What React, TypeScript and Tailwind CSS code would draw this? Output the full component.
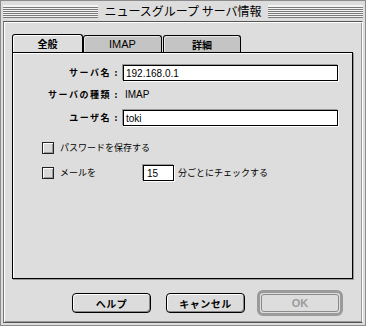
import React from "react";

const JP = "font-['Noto_Sans_CJK_JP','Liberation_Sans',sans-serif]";
const FIELD =
  "h-[16px] border border-black bg-white font-['Liberation_Sans',sans-serif] text-[10px] leading-[14px] text-black shadow-[-1px_-1px_0_#999,1px_1px_0_#fff] outline-none";

function Stripes() {
  return (
    <div className="h-[13px] flex-1 border-t border-[#f4f4f4] bg-[repeating-linear-gradient(to_bottom,#f4f4f4_0px,#f4f4f4_1px,#7a7a7a_1px,#7a7a7a_2px)]" />
  );
}

function Checkbox({ label }: { label: string }) {
  return (
    <span className="flex items-center gap-[6px]">
      <span className="h-[12px] w-[12px] border border-[#222] bg-[#d8d8d8] shadow-[inset_1px_1px_0_#fff,inset_-1px_-1px_0_#999]" />
      <span className="text-[9px] leading-[16px] text-black">{label}</span>
    </span>
  );
}

function Button({ label, width }: { label: string; width: string }) {
  return (
    <button
      className={`${width} flex h-[20px] items-center justify-center rounded-[4px] border border-black bg-[#dcdcdc] text-[10px] font-bold tracking-[0.5px] text-black shadow-[inset_1px_1px_0_#fff,inset_-1px_-1px_0_#888]`}
    >
      {label}
    </button>
  );
}

function Label({ children }: { children: React.ReactNode }) {
  return (
    <span className="w-[106px] text-right text-[9px] font-bold leading-[16px] tracking-[1.5px]">{children}</span>
  );
}

export default function App() {
  return (
    <div className={`flex h-[326px] w-[366px] flex-col border border-[#8c8c8c] bg-[#dddddd] ${JP}`}>
      {/* Title bar */}
      <div className="flex h-[20px] items-center gap-[6px] px-[2px]">
        <Stripes />
        <span className="text-[12px] leading-[14px] text-black">ニュースグループ サーバ情報</span>
        <Stripes />
      </div>

      {/* Window body */}
      <div className="mx-[2px] mb-[2px] flex flex-1 flex-col border border-t-[#555] border-l-[#777] border-r-[#fff] border-b-[#555] shadow-[inset_1px_1px_0_#fff,inset_-1px_-1px_0_#999]">
        {/* Tabs */}
        <div className="ml-[8px] mt-[13px] flex h-[17px] items-end">
          <div className="relative z-10 flex h-[18px] w-[71px] items-center justify-center rounded-t-[3px] border border-b-0 border-black bg-[#dddddd] pb-[1px] text-[10px] font-bold shadow-[inset_1px_1px_0_#fff]">
            全般
          </div>
          <div className="flex h-[17px] w-[79px] items-center justify-center rounded-t-[3px] border border-b-0 border-black bg-[#c4c4c4] font-['Liberation_Sans',sans-serif] text-[11px] shadow-[inset_1px_1px_0_#e6e6e6]">
            IMAP
          </div>
          <div className="ml-[1px] flex h-[17px] w-[78px] items-center justify-center rounded-t-[3px] border border-b-0 border-black bg-[#c4c4c4] text-[10px] font-bold shadow-[inset_1px_1px_0_#e6e6e6]">
            詳細
          </div>
        </div>

        {/* Tab panel */}
        <div className="ml-[8px] h-[227px] w-[341px] border border-black bg-[#dddddd] shadow-[inset_1px_1px_0_#fff,1px_1px_0_#999]">
          <div className="mt-[12px] flex items-center">
            <Label>サーバ名 :</Label>
            <input className={`ml-[4px] w-[215px] px-[2px] ${FIELD}`} defaultValue="192.168.0.1" />
          </div>
          <div className="mt-[6px] flex items-center">
            <Label>サーバの種類 :</Label>
            <span className="ml-[6px] font-['Liberation_Sans',sans-serif] text-[10px] leading-[16px]">IMAP</span>
          </div>
          <div className="mt-[7px] flex items-center">
            <Label>ユーザ名 :</Label>
            <input className={`ml-[4px] w-[215px] px-[2px] ${FIELD}`} defaultValue="toki" />
          </div>

          <div className="ml-[29px] mt-[14px] flex h-[16px] items-center">
            <Checkbox label="パスワードを保存する" />
          </div>
          <div className="ml-[29px] mt-[9px] flex h-[16px] items-center">
            <span className="w-[101px]">
              <Checkbox label="メールを" />
            </span>
            <input className={`w-[31px] px-[3px] ${FIELD}`} defaultValue="15" />
            <span className="ml-[4px] text-[9px] leading-[16px]">分ごとにチェックする</span>
          </div>
        </div>

        {/* Buttons */}
        <div className="ml-[68px] mt-[11px] flex h-[26px] items-center">
          <Button label="ヘルプ" width="w-[79px]" />
          <span className="ml-[15px]">
            <Button label="キャンセル" width="w-[79px]" />
          </span>
          <div className="ml-[12px] flex h-[26px] w-[86px] items-center justify-center rounded-[6px] border-[3px] border-[#9a9a9a]">
            <div className="flex h-[18px] w-[78px] items-center justify-center rounded-[3px] border border-[#8a8a8a] font-['Liberation_Sans',sans-serif] text-[11px] font-bold text-[#9a9a9a]">
              OK
            </div>
          </div>
        </div>
      </div>
    </div>
  );
}
